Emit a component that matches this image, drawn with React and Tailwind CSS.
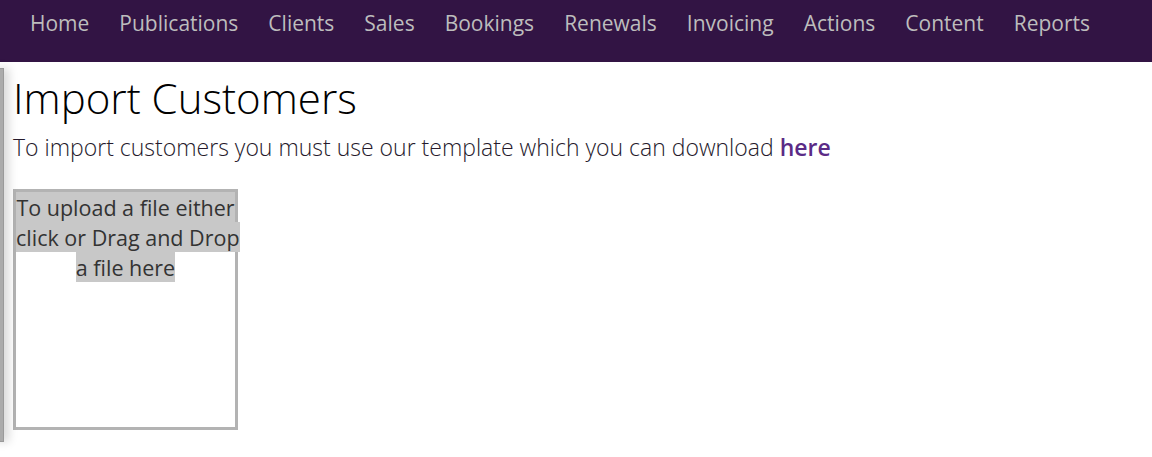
import React from "react";

const navItems = [
  "Home",
  "Publications",
  "Clients",
  "Sales",
  "Bookings",
  "Renewals",
  "Invoicing",
  "Actions",
  "Content",
  "Reports",
];

export default function App() {
  return (
    <div className="relative min-h-[457px] bg-white font-['Open_Sans',sans-serif] overflow-hidden">
      {/* top navigation */}
      <nav className="h-[62px] bg-[#321444] flex items-start pl-[15px]">
        {navItems.map((item) => (
          <a
            key={item}
            className="px-[15px] pt-[8px] text-[21px] leading-[30px] text-[#bdbdbd]"
          >
            {item}
          </a>
        ))}
      </nav>

      {/* collapsed side panel peeking in from the left */}
      <div className="absolute left-[-10px] top-[68px] w-[14px] h-[374px] bg-[#ababab] border border-[#9a9a9a] shadow-[5px_0_10px_rgba(0,0,0,0.15)]"></div>

      <div className="pl-[13px] pt-[8px]">
        <h1 className="text-[42px] leading-[56px] font-light text-black">
          Import Customers
        </h1>
        <p className="text-[23px] leading-[32px] font-light text-[#261a2c] mt-[5px]">
          To import customers you must use our template which you can download{" "}
          <a className="font-semibold text-[#5b2b86]">here</a>
        </p>

        <div className="mt-[26px] w-[225px] h-[241px] border-[3px] border-[#b3b3b3] text-center whitespace-nowrap">
          <span className="bg-[#c8c8c8] text-[21.5px] leading-[30px] text-[#333] py-[0.5px]">
            To upload a file either <br />
            click or Drag and Drop <br />
            a file here
          </span>
        </div>
      </div>
    </div>
  );
}
